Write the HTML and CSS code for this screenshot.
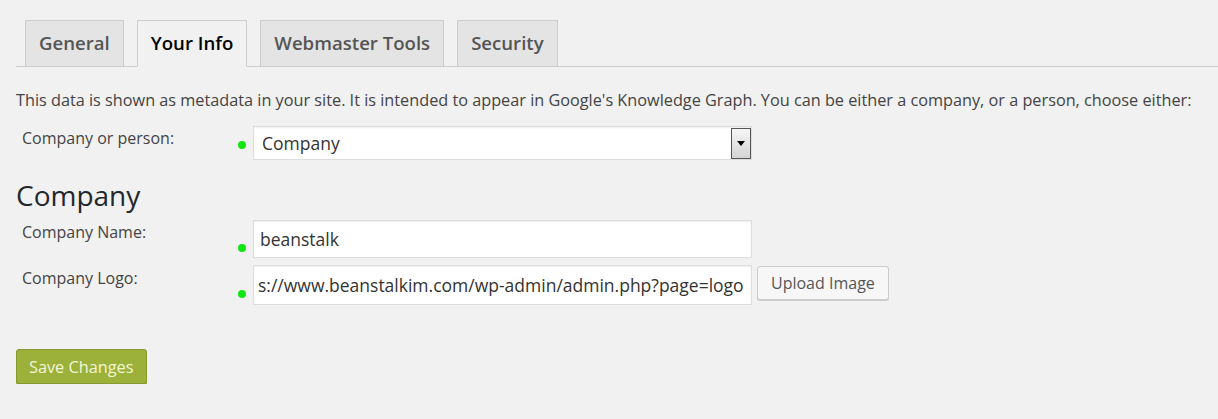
FILE: index.html
```html
<!DOCTYPE html>
<html>
<head>
    <title>Your Info</title>
    <link rel="stylesheet" href="styles.css">
</head>
<body>
    <div class="wrap">
        <div class="nav-tabs">
            <a class="nav-tab">General</a>
            <a class="nav-tab nav-tab-active">Your Info</a>
            <a class="nav-tab">Webmaster Tools</a>
            <a class="nav-tab">Security</a>
        </div>

        <p class="intro">This data is shown as metadata in your site. It is intended to appear in Google's Knowledge Graph. You can be either a company, or a person, choose either:</p>

        <div class="form-row">
            <label class="row-label">Company or person:</label>
            <div class="row-field">
                <span class="dot"></span>
                <div class="select-wrap">
                    <select class="field-select">
                        <option>Company</option>
                        <option>Person</option>
                    </select>
                    <span class="select-arrow"></span>
                </div>
            </div>
        </div>

        <h2 class="section-title">Company</h2>

        <div class="form-row">
            <label class="row-label">Company Name:</label>
            <div class="row-field">
                <span class="dot dot-low"></span>
                <input class="field-text" type="text" value="beanstalk">
            </div>
        </div>

        <div class="form-row row-logo">
            <label class="row-label">Company Logo:</label>
            <div class="row-field">
                <span class="dot dot-low"></span>
                <input class="field-text field-url" type="text" value="s://www.beanstalkim.com/wp-admin/admin.php?page=logo">
                <button class="upload-button">Upload Image</button>
            </div>
        </div>

        <button class="save-button">Save Changes</button>
    </div>
</body>
</html>
```

FILE: styles.css
```css
body {
    margin: 0;
    background-color: #f1f1f1;
    font-family: "Open Sans", sans-serif;
    color: #444;
}

.wrap {
    padding: 20px 0 0 16px;
}

/* tab strip */
.nav-tabs {
    display: flex;
    gap: 13px;
    padding-left: 9px;
    border-bottom: 1px solid #ccc;
    height: 46px;
}

.nav-tab {
    display: block;
    padding: 10px 13px 11px;
    font-size: 18.6px;
    font-weight: 600;
    line-height: 24px;
    color: #555;
    background-color: #e4e4e4;
    border: 1px solid #ccc;
    border-bottom: none;
    cursor: pointer;
}

.nav-tab-active {
    color: #000;
    background-color: #f1f1f1;
    border-bottom: 1px solid #f1f1f1;
    margin-bottom: -1px;
}

.intro {
    margin: 23px 0 16px;
    font-size: 16.25px;
    line-height: 20px;
}

/* form rows */
.form-row {
    display: flex;
    align-items: flex-start;
    padding-left: 6px;
}

.row-label {
    width: 216px;
    padding-top: 2px;
    font-size: 16px;
    line-height: 20px;
    color: #444;
}

.row-field {
    display: flex;
    align-items: center;
    gap: 7px;
}

.dot {
    width: 8px;
    height: 8px;
    border-radius: 50%;
    background-color: #12e612;
    margin-top: 4px;
}

.dot-low {
    margin-top: 18px;
}

.select-wrap {
    position: relative;
}

.field-select {
    appearance: none;
    width: 499px;
    height: 34px;
    padding: 0 8px;
    font-family: "Open Sans", sans-serif;
    font-size: 17.5px;
    color: #333;
    background-color: #fff;
    border: 1px solid #ddd;
    box-shadow: inset 0 1px 2px rgba(0, 0, 0, 0.07);
    border-radius: 0;
}

.select-arrow {
    position: absolute;
    top: 2px;
    right: 1px;
    width: 18px;
    height: 29px;
    border: 1px solid #555;
    background: linear-gradient(#f6f6f6, #d4d4d4);
    pointer-events: none;
}

.select-arrow::after {
    content: "";
    position: absolute;
    top: 12px;
    left: 5px;
    border-left: 4px solid transparent;
    border-right: 4px solid transparent;
    border-top: 5px solid #000;
}

.section-title {
    margin: 17px 0 6px;
    font-size: 28px;
    font-weight: 400;
    line-height: 37px;
    color: #23282d;
}

.field-text {
    box-sizing: border-box;
    width: 499px;
    height: 38px;
    padding: 0 6px;
    font-family: "Open Sans", sans-serif;
    font-size: 17.5px;
    color: #333;
    background-color: #fff;
    border: 1px solid #ddd;
    box-shadow: inset 0 1px 2px rgba(0, 0, 0, 0.07);
    outline: none;
}

.row-logo {
    margin-top: 7px;
}

.row-logo .row-label {
    padding-top: 3px;
}

.field-url {
    height: 40px;
    padding: 0 4px;
}

.upload-button {
    align-self: flex-start;
    height: 34px;
    margin: 1px 0 0 -2px;
    padding: 0 13px;
    font-family: "Open Sans", sans-serif;
    font-size: 16px;
    color: #555;
    background-color: #f7f7f7;
    border: 1px solid #ccc;
    border-radius: 3px;
    box-shadow: 0 1px 0 #ccc;
    cursor: pointer;
}

.save-button {
    display: block;
    margin-top: 44px;
    height: 35px;
    padding: 0 12px;
    font-family: "Open Sans", sans-serif;
    font-size: 16.3px;
    color: #f4f6d8;
    background-color: #9bb13a;
    border: 1px solid #87992f;
    border-radius: 3px;
    box-shadow: 0 1px 0 #8a9c33;
    cursor: pointer;
}
```
